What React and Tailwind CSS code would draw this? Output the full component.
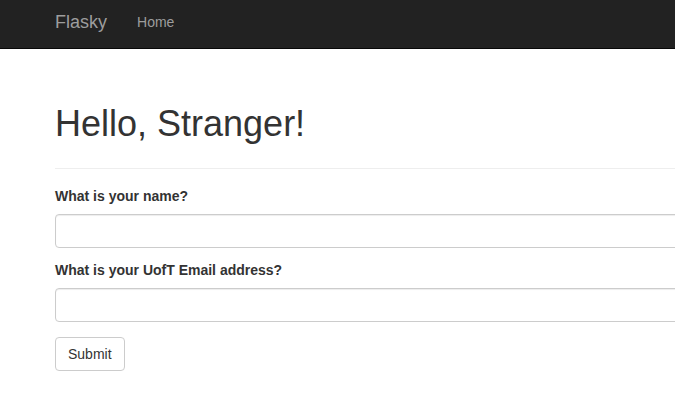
import React from 'react';

const fieldClass =
  'block w-[720px] h-[34px] px-3 rounded border border-[#cccccc] bg-white text-sm text-[#555555] shadow-[inset_0_1px_1px_rgba(0,0,0,0.075)] outline-none';

const App = () => {
  return (
    <div className="min-h-screen w-full overflow-hidden bg-white font-['Liberation_Sans',Arial,sans-serif] text-[#333333]">
      {/* navbar */}
      <nav className="h-[49px] bg-[#222222] border-b border-[#080808]">
        <div className="flex items-start pl-[55px]">
          <a className="pt-[12px] text-[18px] leading-5 text-[#9d9d9d]">Flasky</a>
          <a className="ml-[30px] pt-[12px] text-sm leading-5 text-[#9d9d9d]">Home</a>
        </div>
      </nav>

      {/* content */}
      <div className="pl-[55px] w-[775px]">
        <div className="mt-[55px] pb-[24px] border-b border-[#eeeeee]">
          <h1 className="text-[36px] leading-[40px] font-normal">Hello, Stranger!</h1>
        </div>

        <form onSubmit={(e) => e.preventDefault()}>
          <label className="block mt-[17px] mb-[8px] text-sm leading-5 font-bold">What is your name?</label>
          <input type="text" className={fieldClass} />

          <label className="block mt-[12px] mb-[8px] text-sm leading-5 font-bold">
            What is your UofT Email address?
          </label>
          <input type="text" className={fieldClass} />

          <button
            type="submit"
            className="mt-[15px] h-[34px] px-3 rounded border border-[#cccccc] bg-white text-sm leading-5 text-[#333333]"
          >
            Submit
          </button>
        </form>
      </div>
    </div>
  );
};

export default App;
